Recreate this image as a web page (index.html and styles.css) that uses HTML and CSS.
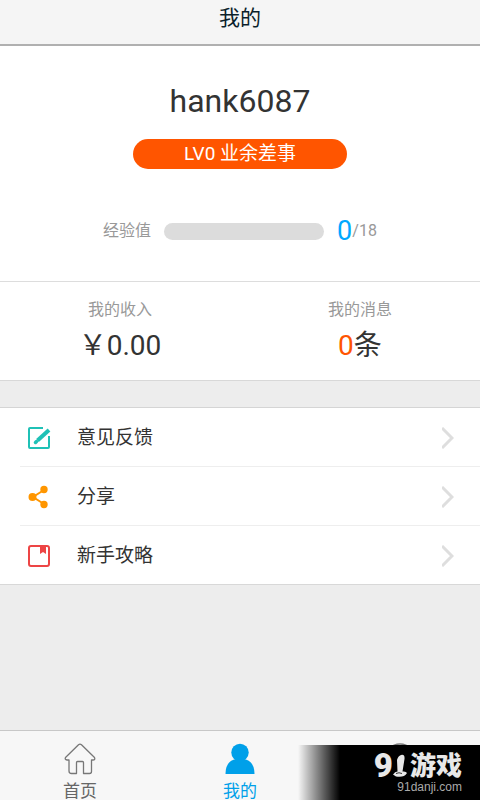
FILE: index.html
```html
<!DOCTYPE html>
<html lang="zh-CN">
<head>
<meta charset="utf-8">
<meta name="viewport" content="width=device-width, initial-scale=1">
<title>我的</title>
<link rel="stylesheet" href="styles.css">
</head>
<body>
<header class="topbar"><h1>我的</h1></header>
<main>
  <section class="profile">
    <h2 class="username">hank6087</h2>
    <p class="level">LV0 业余差事</p>
    <div class="exp">
      <span class="exp-label" id="exp">经验值</span>
      <div class="exp-bar" role="progressbar" aria-labelledby="exp" aria-valuenow="0" aria-valuemin="0" aria-valuemax="18"></div>
      <p class="exp-count"><span class="exp-now">0</span><span>/18</span></p>
    </div>
  </section>
  <section class="stats">
    <a class="stat" href="#income"><span class="stat-label">我的收入</span><span class="stat-value">￥0.00</span></a>
    <a class="stat" href="#messages"><span class="stat-label">我的消息</span><span class="stat-value"><span class="hot">0</span>条</span></a>
  </section>
  <nav class="menu">
    <a class="row" href="#feedback">
      <svg class="row-icon" viewBox="0 0 24 24" fill="none" stroke="#1fc1b6" stroke-width="2"><path d="M16 2H3Q2 2 2 3V21Q2 22 3 22H21Q22 22 22 21V10"/><path d="M10.500 14.500L22 4" stroke-width="4"/><path d="M9.500 15.500L8.500 16.500" stroke-width="3.500" stroke-linecap="round"/></svg>
      <span class="row-text">意见反馈</span>
      <svg class="chevron" viewBox="0 0 12 22"><path d="M0 1L10 11L0 21"/></svg>
    </a>
    <a class="row" href="#share">
      <svg class="row-icon" viewBox="0 0 24 24" fill="#ff9600" stroke="#ff9600" stroke-width="2"><path d="M17 5L6 12L17 19" fill="none"/><circle cx="5.500" cy="12" r="3"/><circle cx="17" cy="4.500" r="2.700"/><circle cx="17" cy="19.500" r="2.700"/></svg>
      <span class="row-text">分享</span>
      <svg class="chevron" viewBox="0 0 12 22"><path d="M0 1L10 11L0 21"/></svg>
    </a>
    <a class="row" href="#guide">
      <svg class="row-icon" viewBox="0 0 24 24"><rect x="2" y="2" width="20" height="20" rx="2" fill="none" stroke="#ed4545" stroke-width="2"/><path d="M13 2H19V10L16 8L13 10Z" fill="#ed4545"/></svg>
      <span class="row-text">新手攻略</span>
      <svg class="chevron" viewBox="0 0 12 22"><path d="M0 1L10 11L0 21"/></svg>
    </a>
  </nav>
</main>
<footer class="bottom">
  <nav class="tabs">
    <a class="tab" href="#home">
      <svg class="tab-icon" viewBox="0 0 32 32" fill="none" stroke="#777" stroke-width="1.300" stroke-linejoin="round"><path d="M14.500 1.800Q16 .5 17.500 1.800L30.500 14.500Q31.500 17 29 17H27.500V28.500Q27.500 30.500 25.500 30.500H19.500V19.500Q19.500 18.500 18.500 18.500H13.500Q12.500 18.500 12.500 19.500V30.500H7.500Q5 30.500 5 28V17H3Q.5 16.500 1.500 14.500Z"/></svg>
      <span>首页</span>
    </a>
    <a class="tab active" href="#mine" aria-current="page">
      <svg class="tab-icon" viewBox="0 0 32 32" fill="#00a0e9"><circle cx="16" cy="9.500" r="8.700"/><path d="M1.500 31Q1.500 18 12 16H20Q30.500 18 30.500 31Z"/></svg>
      <span>我的</span>
    </a>
    <a class="tab" href="#more" aria-label="more">
      <svg class="tab-icon" viewBox="0 0 32 32" fill="none" stroke="#777" stroke-width="1.500"><circle cx="16" cy="16" r="15"/></svg>
    </a>
  </nav>
  <div class="brand">
    <div class="brand-name"><span class="nine">9</span><svg class="sword" viewBox="0 0 14 24" fill="#e8e8e8"><path d="M8 1Q12 0 11.500 5L9.500 17.500Q13 17 14 19Q11 24 3 22.500L0 20.500Q2 17.500 4.500 17.500L4 6Q5 2 8 1Z"/><path d="M3 19.500Q6 18 9 19.500" fill="none" stroke="#333"/></svg><span class="game">游戏</span></div>
    <div class="brand-url">91danji.com</div>
  </div>
</footer>
</body>
</html>
```
FILE: styles.css
```css
* { box-sizing: border-box; }
body {
  margin: 0;
  min-height: 100vh;
  display: flex;
  flex-direction: column;
  background: #ededed;
  color: #333;
  font-family: Roboto, "Noto Sans CJK SC", sans-serif;
}
h1, h2, p { margin: 0; font-weight: 400; }
a { color: inherit; text-decoration: none; }
main { flex: 1; }
.topbar {
  height: 46px;
  background: #f5f5f5;
  border-bottom: 2px solid #b0b0b0;
  text-align: center;
}
.topbar h1 { color: #0b1f2b; font-size: 21px; line-height: 36px; }
.profile {
  display: flex;
  flex-direction: column;
  align-items: center;
  padding: 34px 16px;
  background: #fff;
  border-bottom: 1px solid #ddd;
}
.username { font-size: 32px; line-height: 42px; }
.level {
  min-width: 214px;
  margin-top: 17px;
  border-radius: 15px;
  background: #ff5500;
  color: #fff;
  font-size: 19px;
  line-height: 30px;
  text-align: center;
}
.exp {
  display: flex;
  align-items: center;
  margin-top: 46px;
  color: #999;
  font-size: 16px;
  line-height: 32px;
}
.exp-bar {
  width: 160px;
  height: 17px;
  margin: 0 13px;
  border-radius: 9px;
  background: #dcdcdc;
}
.exp-count { display: flex; align-items: center; }
.exp-now { color: #00a8ff; font-size: 27px; }
.stats {
  display: flex;
  padding: 15px 0 11px;
  background: #fff;
  border-bottom: 1px solid #d8d8d8;
}
.stat {
  flex: 1;
  display: flex;
  flex-direction: column;
  align-items: center;
}
.stat-label { color: #999; font-size: 16px; line-height: 26px; }
.stat-value { font-size: 28px; line-height: 46px; }
.hot { color: #ff5500; }
.menu {
  margin-top: 26px;
  background: #fff;
  border-top: 1px solid #d5d5d5;
  border-bottom: 1px solid #d8d8d8;
}
.row {
  display: flex;
  align-items: center;
  height: 58px;
  margin-left: 20px;
  padding: 2px 26px 0 7px;
}
.row + .row { height: 59px; border-top: 1px solid #eee; }
.row-icon { width: 24px; height: 24px; }
.row-text { flex: 1; margin-left: 26px; font-size: 19px; line-height: 28px; }
.chevron { width: 12px; height: 22px; fill: none; stroke: #dedede; stroke-width: 3; }
.bottom { position: relative; }
.tabs {
  display: flex;
  height: 70px;
  padding-top: 12px;
  overflow: hidden;
  background: #f7f7f7;
  border-top: 1px solid #c8c8c8;
}
.tab {
  flex: 1;
  display: flex;
  flex-direction: column;
  align-items: center;
  color: #666;
  font-size: 17px;
  line-height: 32px;
}
.active { color: #00a0e9; }
.tab-icon { width: 32px; height: 32px; flex: none; }
.brand {
  position: absolute;
  right: 0;
  bottom: 0;
  width: 182px;
  height: 55px;
  padding: 6px 18px 0 0;
  background: linear-gradient(to right, rgba(0, 0, 0, 0), #000 42px);
  color: #e8e8e8;
}
.brand-name { display: flex; justify-content: flex-end; align-items: center; height: 29px; }
.nine { font-size: 33px; font-weight: 900; line-height: 28px; }
.sword { width: 14px; height: 24px; flex: none; }
.game { margin-left: 3px; font-size: 26px; font-weight: 900; line-height: 28px; }
.brand-url {
  color: #aaa;
  font-family: "Liberation Sans", sans-serif;
  font-size: 12px;
  line-height: 14px;
  text-align: right;
}
```
